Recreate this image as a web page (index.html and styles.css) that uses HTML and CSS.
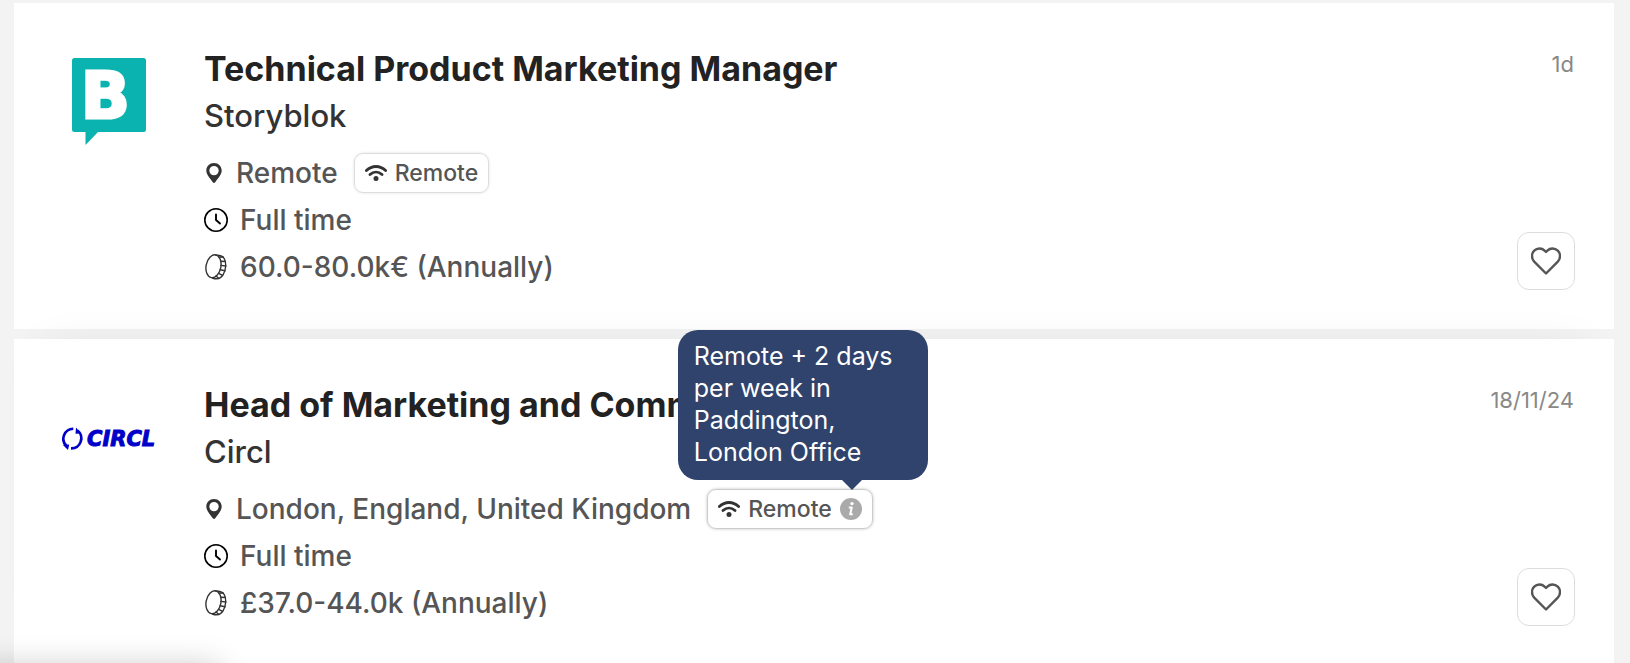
FILE: index.html
```html
<!DOCTYPE html>
<html lang="en">
<head>
    <meta charset="UTF-8">
    <meta name="viewport" content="width=device-width, initial-scale=1.0">
    <title>Jobs</title>
    <link rel="stylesheet" href="styles.css">
</head>
<body>
    <svg class="sprite" aria-hidden="true">
        <symbol id="pin" viewBox="0 0 16 20">
            <path fill-rule="evenodd" d="M8 0C3.6 0 .3 3.400.3 7.600c0 4.500 4.300 8.400 6.500 11.700q1.200 1.300 2.400 0c2.200-3.300 6.500-7.200 6.500-11.700C15.700 3.400 12.400 0 8 0zM8 2.900a4.700 4.700 0 1 1 0 9.400 4.700 4.700 0 0 1 0-9.400z" fill="#333"/>
        </symbol>
        <symbol id="wifi" viewBox="0 0 22 16">
            <path d="M1.400 5.600C7 .1 15 .1 20.600 5.600M5 9.600c3.600-3.400 8.400-3.400 12 0" fill="none" stroke="#333" stroke-width="2.800" stroke-linecap="round"/>
            <circle cx="11" cy="13.500" r="2.500" fill="#333"/>
        </symbol>
        <symbol id="clock" viewBox="0 0 24 24">
            <circle cx="12" cy="12" r="11.200" fill="none" stroke="#000" stroke-width="1.600"/>
            <path d="M12 6.500V12l4 3.500" fill="none" stroke="#000" stroke-width="1.900" stroke-linecap="round" stroke-linejoin="round"/>
        </symbol>
        <symbol id="coin" viewBox="0 0 24 26">
            <g fill="none" stroke="#333" stroke-width="1.400" stroke-linecap="round">
                <ellipse cx="9.500" cy="12.300" rx="7.400" ry="11.600" transform="rotate(11 9.500 12.300)"/>
                <path d="M11.500 1c4.500.2 7 .6 8.700 3.500 2.500 4.500 1.700 12-1.200 16.300-2.300 3.500-6.200 4.900-10.500 3.200"/>
                <path d="M15 3.300l4.200-.4M16.600 7.200l4.700.3M17 11.400l4.800.6M16.300 15.700l4.600 1.100M14.600 19.300l4 2.100M12 22l3 2.500"/>
            </g>
        </symbol>
        <symbol id="heart" viewBox="0 0 30 28">
            <path d="M15 26.500L3.200 14.600C.2 11.400.3 6.600 3.200 3.700c2.900-2.900 7.600-2.900 10.400-.1L15 5l1.400-1.400c2.800-2.800 7.500-2.800 10.400.1 2.900 2.900 3 7.700 0 10.900z" fill="none" stroke="#555" stroke-width="2.400" stroke-linejoin="round"/>
        </symbol>
    </svg>

    <main class="jobs">
        <article class="job">
            <svg class="logo" viewBox="0 0 96 96" role="img" aria-label="Storyblok">
                <path d="M13.500 5h69a2.500 2.500 0 0 1 2.500 2.500v69a2.500 2.500 0 0 1-2.500 2.500H37L24.500 92V79h-11a2.500 2.500 0 0 1-2.500-2.500v-69A2.500 2.500 0 0 1 13.500 5z" fill="#0ab3af"/>
                <text class="logo-letter" x="20" y="65">B</text>
            </svg>
            <div class="details">
                <h2 class="title"><a href="#">Technical Product Marketing Manager</a></h2>
                <p class="company">Storyblok</p>
                <ul class="facts">
                    <li class="place">
                        <svg class="icon-pin"><use href="#pin"/></svg>
                        <span>Remote</span>
                        <span class="badge"><svg class="icon-wifi"><use href="#wifi"/></svg>Remote</span>
                    </li>
                    <li><svg class="icon"><use href="#clock"/></svg>Full time</li>
                    <li><svg class="icon"><use href="#coin"/></svg>60.0-80.0k€ (Annually)</li>
                </ul>
            </div>
            <div class="side">
                <time class="date">1d</time>
                <button class="save" aria-label="Save job"><svg class="icon-heart"><use href="#heart"/></svg></button>
            </div>
        </article>

        <article class="job active">
            <svg class="logo" viewBox="0 0 96 96" role="img" aria-label="Circl">
                <g fill="none" stroke="#0000c8" stroke-width="2.600">
                    <path d="M12.300 39.700a10 10 0 0 0-6.500 17.500"/>
                    <path d="M10 59.400a10 10 0 0 0 6.500-17.800"/>
                </g>
                <path d="M2 56l6.200-.5L7 61zM15 38.500l5 6-5.500.2z" fill="#0000c8"/>
                <text class="logo-name" x="26" y="57">CIRCL</text>
            </svg>
            <div class="details">
                <h2 class="title"><a href="#">Head of Marketing and Comms</a></h2>
                <p class="company">Circl</p>
                <ul class="facts">
                    <li class="place">
                        <svg class="icon-pin"><use href="#pin"/></svg>
                        <span>London, England, United Kingdom</span>
                        <span class="badge">
                            <svg class="icon-wifi"><use href="#wifi"/></svg>Remote
                            <span class="info">
                                <svg class="icon-info" viewBox="0 0 22 22">
                                    <circle cx="11" cy="11" r="11" fill="#aaa"/>
                                    <circle cx="12" cy="5.600" r="1.700" fill="#fff"/>
                                    <path d="M8.800 9.500h3l-1.600 6.800h2.600" fill="none" stroke="#fff" stroke-width="2" stroke-linejoin="round"/>
                                </svg>
                                <span class="tooltip" role="tooltip">Remote + 2 days per week in Paddington, London Office</span>
                            </span>
                        </span>
                    </li>
                    <li><svg class="icon"><use href="#clock"/></svg>Full time</li>
                    <li><svg class="icon"><use href="#coin"/></svg>£37.0-44.0k (Annually)</li>
                </ul>
            </div>
            <div class="side">
                <time class="date">18/11/24</time>
                <button class="save" aria-label="Save job"><svg class="icon-heart"><use href="#heart"/></svg></button>
            </div>
        </article>
    </main>
    <div class="status"></div>
</body>
</html>
```

FILE: styles.css
```css
* {
    box-sizing: border-box;
}
html {
    scrollbar-width: none;
}
body {
    margin: 0;
    background-color: #f3f3f3;
    color: #555;
    font-family: Inter, sans-serif;
    font-size: 28px;
    font-weight: 500;
}
.sprite {
    display: none;
}
.jobs {
    display: flex;
    flex-direction: column;
    gap: 10px;
    padding: 3px 16px 0 14px;
}
.job {
    display: flex;
    gap: 47px;
    padding: 44px 39px 39px 47px;
    background-color: #fff;
}
.job.active {
    box-shadow: 0 -24px 40px -30px rgba(0, 0, 0, 0.07);
}
.logo {
    flex: none;
    width: 96px;
    height: 96px;
    margin-top: 6px;
}
.logo-letter {
    font: bold 64px "DejaVu Sans", sans-serif;
    fill: #fff;
    stroke: #fff;
    stroke-width: 3px;
}
.logo-name {
    font: italic bold 21px "DejaVu Sans", sans-serif;
    fill: #0000c8;
    stroke: #0000c8;
    stroke-width: 1px;
}
.details {
    flex: 1;
}
.title {
    margin: 0;
    font-size: 34px;
    font-weight: 700;
    line-height: 44px;
}
.title a {
    color: #222;
    text-decoration: none;
}
.company {
    margin: 0 0 8px;
    color: #333;
    font-size: 31px;
    line-height: 50px;
}
.facts {
    margin: 0;
    padding: 0;
    list-style: none;
}
.facts li {
    display: flex;
    align-items: center;
    gap: 12px;
    height: 47px;
}
.facts .place {
    gap: 16px;
}
.icon {
    width: 24px;
    height: 26px;
}
.icon-pin {
    width: 16px;
    height: 20px;
    margin: 0 -2px 0 2px;
}
.icon-wifi {
    width: 22px;
    height: 16px;
}
.icon-info {
    display: block;
    width: 22px;
    height: 22px;
}
.icon-heart {
    width: 30px;
    height: 28px;
}
.badge {
    display: flex;
    align-items: center;
    gap: 8px;
    height: 40px;
    padding: 0 10px;
    border: 1px solid #ddd;
    border-radius: 9px;
    font-size: 23px;
    box-shadow: 0 0 3px rgba(0, 0, 0, 0.12);
}
.active .badge {
    border-color: #ccc;
    box-shadow: 0 0 3px rgba(0, 0, 0, 0.25);
}
.info {
    position: relative;
}
.tooltip {
    position: absolute;
    bottom: 40px;
    left: -162px;
    width: 250px;
    padding: 10px 16px 12px;
    border-radius: 20px;
    background-color: #30436c;
    color: #fff;
    font-size: 25px;
    font-weight: 400;
    line-height: 32px;
}
.tooltip::after {
    content: "";
    position: absolute;
    top: 100%;
    left: 164px;
    border: 10px solid transparent;
    border-top-color: #30436c;
    border-bottom: 0;
}
.side {
    display: flex;
    flex-direction: column;
    align-items: flex-end;
    justify-content: space-between;
}
.date {
    padding-right: 1px;
    color: #888;
    font-size: 22px;
    font-weight: 400;
    line-height: 34px;
}
.save {
    display: flex;
    align-items: center;
    justify-content: center;
    width: 58px;
    height: 58px;
    padding: 0;
    border: 1px solid #ddd;
    border-radius: 12px;
    background-color: #fff;
    cursor: pointer;
}
.status {
    position: fixed;
    bottom: -40px;
    left: -40px;
    width: 260px;
    height: 36px;
    box-shadow: 0 0 32px rgba(0, 0, 0, 0.22);
}
```
